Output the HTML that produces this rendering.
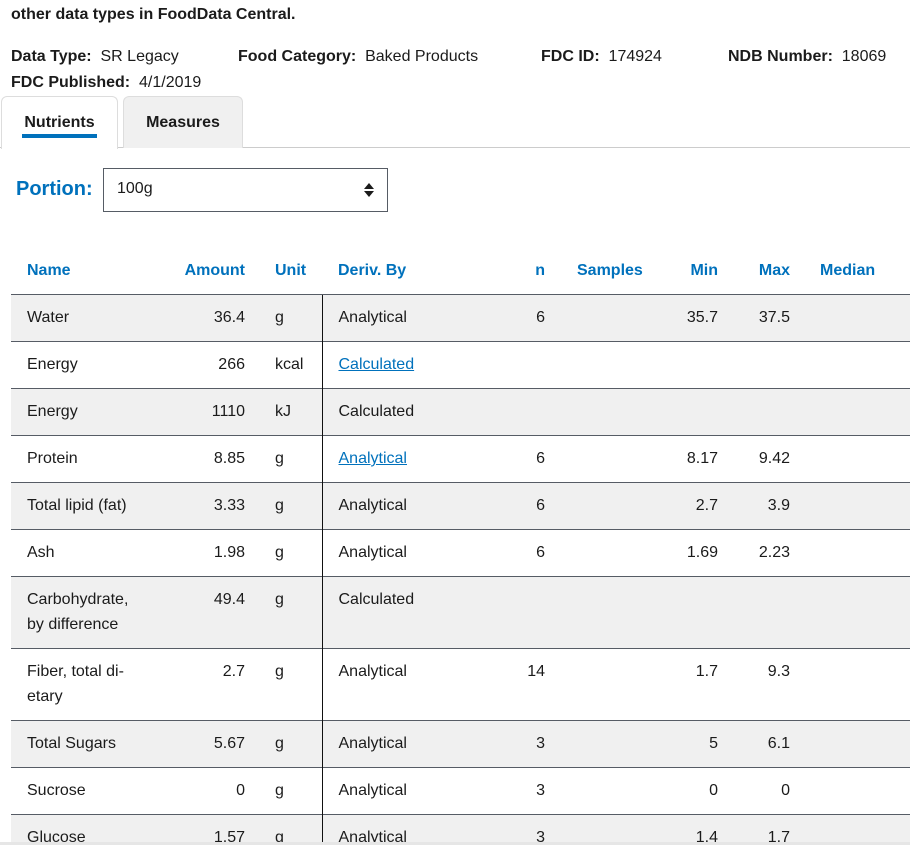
<!DOCTYPE html>
<html><head><meta charset="utf-8"><style>
*{box-sizing:border-box;margin:0;padding:0}
html,body{width:910px;height:845px;overflow:hidden;background:#fff}
body{font-family:"Liberation Sans",Arial,sans-serif;font-size:16px;color:#1b1b1b;position:relative}
.a{position:absolute;white-space:nowrap}
b{font-weight:bold}
.tab{position:absolute;top:96px;height:52px;border:1px solid #ddd;border-bottom:none;border-radius:6px 6px 0 0;font-weight:bold;font-size:16px;text-align:center;line-height:52px}
table{position:absolute;left:11px;top:247px;width:899px;border-collapse:collapse;table-layout:fixed}
td,th{padding:10px 15px 11px;line-height:25px;vertical-align:top;text-align:left;font-weight:normal}
th{color:#0071bc;font-weight:bold;padding:11px 15px 11px}
tr.r td{border-top:1px solid #565c65}
tr.g td{background:#f0f0f0}
td.d{border-left:1px solid #111;padding-left:16px}
.R{text-align:right}
td.n1,th.n1{padding-left:16px}
td.s,th.s{padding-left:17px}
a{color:#0071bc;text-decoration:underline}
</style></head><body>
<div class="a" style="left:11px;top:6px;font-weight:bold">other data types in FoodData Central.</div>
<div class="a" style="left:11px;top:48px"><b>Data Type:</b>&nbsp; SR Legacy</div>
<div class="a" style="left:238px;top:48px"><b>Food Category:</b>&nbsp; Baked Products</div>
<div class="a" style="left:541px;top:48px"><b>FDC ID:</b>&nbsp; 174924</div>
<div class="a" style="left:728px;top:48px"><b>NDB Number:</b>&nbsp; 18069</div>
<div class="a" style="left:11px;top:74px"><b>FDC Published:</b>&nbsp; 4/1/2019</div>
<div style="position:absolute;left:0;top:147px;width:910px;height:1px;background:#ccc"></div>
<div class="tab" style="left:1px;width:117px;background:#fff;height:53px">Nutrients</div>
<div style="position:absolute;left:22px;top:134px;width:75px;height:4px;background:#0071bc"></div>
<div class="tab" style="left:123px;width:120px;background:#f0f0f0">Measures</div>
<div class="a" style="left:16px;top:178px;font-size:20px;font-weight:bold;color:#0071bc">Portion:</div>
<div style="position:absolute;left:103px;top:168px;width:285px;height:44px;border:1px solid #565c65"></div>
<div class="a" style="left:117px;top:180px">100g</div>
<svg style="position:absolute;left:363px;top:182px" width="12" height="16" viewBox="0 0 12 16"><path d="M6 1L11 7H1Z M1 9H11L6 15Z" fill="#1b1b1b"/></svg>
<table>
<colgroup><col style="width:149px"><col style="width:100px"><col style="width:62px"><col style="width:138px"><col style="width:100px"><col style="width:100px"><col style="width:73px"><col style="width:72px"><col style="width:105px"></colgroup>
<tr><th class="n1">Name</th><th class="R">Amount</th><th>Unit</th><th class="n1">Deriv. By</th><th class="R">n</th><th class="s">Samples</th><th class="R">Min</th><th class="R">Max</th><th>Median</th></tr>
<tr class="r g"><td class="n1">Water</td><td class="R">36.4</td><td>g</td><td class="d">Analytical</td><td class="R">6</td><td class="s"></td><td class="R">35.7</td><td class="R">37.5</td><td></td></tr>
<tr class="r"><td class="n1">Energy</td><td class="R">266</td><td>kcal</td><td class="d"><a>Calculated</a></td><td></td><td></td><td></td><td></td><td></td></tr>
<tr class="r g"><td class="n1">Energy</td><td class="R">1110</td><td>kJ</td><td class="d">Calculated</td><td></td><td></td><td></td><td></td><td></td></tr>
<tr class="r"><td class="n1">Protein</td><td class="R">8.85</td><td>g</td><td class="d"><a>Analytical</a></td><td class="R">6</td><td></td><td class="R">8.17</td><td class="R">9.42</td><td></td></tr>
<tr class="r g"><td class="n1">Total lipid (fat)</td><td class="R">3.33</td><td>g</td><td class="d">Analytical</td><td class="R">6</td><td></td><td class="R">2.7</td><td class="R">3.9</td><td></td></tr>
<tr class="r"><td class="n1">Ash</td><td class="R">1.98</td><td>g</td><td class="d">Analytical</td><td class="R">6</td><td></td><td class="R">1.69</td><td class="R">2.23</td><td></td></tr>
<tr class="r g"><td class="n1">Carbohydrate,<br>by difference</td><td class="R">49.4</td><td>g</td><td class="d">Calculated</td><td></td><td></td><td></td><td></td><td></td></tr>
<tr class="r"><td class="n1">Fiber, total di-<br>etary</td><td class="R">2.7</td><td>g</td><td class="d">Analytical</td><td class="R">14</td><td></td><td class="R">1.7</td><td class="R">9.3</td><td></td></tr>
<tr class="r g"><td class="n1">Total Sugars</td><td class="R">5.67</td><td>g</td><td class="d">Analytical</td><td class="R">3</td><td></td><td class="R">5</td><td class="R">6.1</td><td></td></tr>
<tr class="r"><td class="n1">Sucrose</td><td class="R">0</td><td>g</td><td class="d">Analytical</td><td class="R">3</td><td></td><td class="R">0</td><td class="R">0</td><td></td></tr>
<tr class="r g"><td class="n1">Glucose</td><td class="R">1.57</td><td>g</td><td class="d">Analytical</td><td class="R">3</td><td></td><td class="R">1.4</td><td class="R">1.7</td><td></td></tr>
</table>
<div style="position:absolute;left:0;top:842px;width:910px;height:3px;background:#e6e6e6"></div>
</body></html>
